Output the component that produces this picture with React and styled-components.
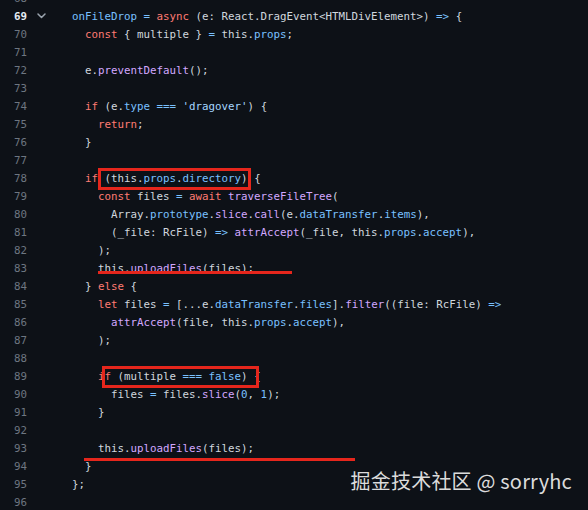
import React from "react";
import styled, { createGlobalStyle } from "styled-components";

const Global = createGlobalStyle`
  html, body { margin: 0; padding: 0; background: #0d1117; }
  body { width: 588px; height: 510px; overflow: hidden; }
`;

const C = {
  txt: "#d0d7de",
  kw: "#ff7b72",
  fn: "#d2a8ff",
  prop: "#79c0ff",
  str: "#a5d6ff",
  num: "#6e7681",
  red: "#e5261c",
};

const Page = styled.div`
  position: relative;
  width: 588px;
  height: 510px;
  overflow: hidden;
  background: #0d1117;
`;

const Code = styled.div`
  display: flex;
  flex-direction: column;
  margin-top: -11px;
  font-family: "DejaVu Sans Mono", "Liberation Mono", monospace;
  font-size: 10.8px;
  color: ${C.txt};
`;

const Row = styled.div`
  position: relative;
  display: flex;
  align-items: center;
  height: 18px;
  white-space: pre;
`;

const LineNo = styled.span`
  width: 27px;
  text-align: right;
  color: ${(p) => (p.$active ? "#e6edf3" : C.num)};
  font-weight: ${(p) => (p.$active ? 700 : 400)};
  flex: none;
`;

const Fold = styled.span`
  width: 45px;
  flex: none;
  display: flex;
  align-items: center;
  padding-left: 10px;
  box-sizing: border-box;
`;

const Text = styled.span`
  padding-left: ${(p) => p.$indent * 13}px;
`;

const T = styled.span`
  color: ${(p) => p.$c};
`;

const Boxed = styled.span`
  position: relative;
  &::after {
    content: "";
    position: absolute;
    left: ${(p) => p.$l}px;
    right: ${(p) => p.$r}px;
    top: -4px;
    bottom: -5px;
    border: 3px solid ${C.red};
    pointer-events: none;
  }
`;

const Underline = styled.div`
  position: absolute;
  left: ${(p) => p.$x}px;
  width: ${(p) => p.$w}px;
  top: ${(p) => p.$y}px;
  height: 3px;
  background: ${C.red};
`;

const Watermark = styled.div`
  position: absolute;
  right: 16px;
  bottom: 17px;
  font-family: "Noto Sans CJK SC", "Noto Sans", sans-serif;
  font-size: 20px;
  line-height: 24px;
  color: #dcdcdc;
  letter-spacing: 0.2px;
`;

const Chevron = () => (
  <svg width="9" height="6" viewBox="0 0 9 6" fill="none">
    <path d="M1 1l3.5 3.5L8 1" stroke="#9aa4ae" strokeWidth="1.5" strokeLinecap="round" strokeLinejoin="round" />
  </svg>
);

const k = (s) => <T $c={C.kw}>{s}</T>;
const f = (s) => <T $c={C.fn}>{s}</T>;
const p = (s) => <T $c={C.prop}>{s}</T>;
const s = (x) => <T $c={C.str}>{x}</T>;

const lines = [
  [68, 0, null],
  [69, 1, <>{p("onFileDrop")} {p("=")} {k("async")} (e: React.DragEvent&lt;HTMLDivElement&gt;) {p("=>")} {"{"}</>],
  [70, 2, <>{k("const")} {"{ multiple }"} {p("=")} this.{p("props")};</>],
  [71, 0, null],
  [72, 2, <>e.{f("preventDefault")}();</>],
  [73, 0, null],
  [74, 2, <>{k("if")} (e.{p("type")} {p("===")} {s("'dragover'")}) {"{"}</>],
  [75, 3, <>{k("return")};</>],
  [76, 2, <>{"}"}</>],
  [77, 0, null],
  [78, 2, <>{k("if")} <Boxed $l={-7} $r={-3}>(this.{p("props")}.{p("directory")})</Boxed> {"{"}</>],
  [79, 3, <>{k("const")} files {p("=")} {k("await")} {f("traverseFileTree")}(</>],
  [80, 4, <>Array.{p("prototype")}.{f("slice")}.{f("call")}(e.{p("dataTransfer")}.{p("items")}),</>],
  [81, 4, <>(_file: RcFile) {p("=>")} {f("attrAccept")}(_file, this.{p("props")}.{p("accept")}),</>],
  [82, 3, <>);</>],
  [83, 3, <>this.{f("uploadFiles")}(files);</>, { x: 98, w: 194, y: 12 }],
  [84, 2, <>{"} "}{k("else")} {"{"}</>],
  [85, 3, <>{k("let")} files {p("=")} [...e.{p("dataTransfer")}.{p("files")}].{f("filter")}((file: RcFile) {p("=>")}</>],
  [86, 4, <>{f("attrAccept")}(file, this.{p("props")}.{p("accept")}),</>],
  [87, 3, <>);</>],
  [88, 0, null],
  [89, 3, <>{k("if")} <Boxed $l={-16} $r={-11}>(multiple {p("===")} {p("false")})</Boxed> {"{"}</>],
  [90, 4, <>files {p("=")} files.{f("slice")}({p("0")}, {p("1")});</>],
  [91, 3, <>{"}"}</>],
  [92, 0, null],
  [93, 3, <>this.{f("uploadFiles")}(files);</>, { x: 84, w: 271, y: 19 }],
  [94, 2, <>{"}"}</>],
  [95, 1, <>{"};"}</>],
  [96, 0, null],
];

export default function App() {
  return (
    <Page>
      <Global />
      <Code>
        {lines.map(([n, ind, content, ul]) => (
          <Row key={n}>
            <LineNo $active={n === 69}>{n}</LineNo>
            <Fold>{n === 69 ? <Chevron /> : null}</Fold>
            {content ? <Text $indent={ind - 1}>{content}</Text> : null}
            {ul ? <Underline $x={ul.x} $w={ul.w} $y={ul.y} /> : null}
          </Row>
        ))}
      </Code>
      <Watermark>掘金技术社区 @ sorryhc</Watermark>
    </Page>
  );
}
